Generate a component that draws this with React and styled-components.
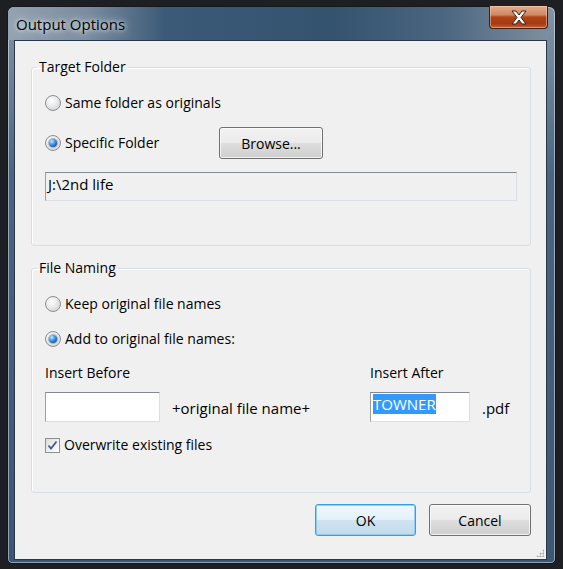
import React from "react";
import styled, { createGlobalStyle } from "styled-components";

const GlobalStyle = createGlobalStyle`
  body {
    margin: 0;
    background: #1d1f22;
    font-family: "Open Sans", "Noto Sans", sans-serif;
    font-size: 14px;
    color: #000;
  }
`;

const Window = styled.div`
  box-sizing: border-box;
  margin: 6px 0 0 7px;
  width: 549px;
  height: 558px;
  padding: 0 8px 3px 6px;
  border: 1px solid #14181d;
  border-radius: 7px 7px 5px 5px;
  box-shadow: inset 0 0 0 1px rgba(255, 255, 255, 0.45);
  background: linear-gradient(
    to bottom,
    #8294a6 0,
    #6d8399 12%,
    #4a6582 30%,
    #3c5775 100%
  );
  display: flex;
  flex-direction: column;
`;

const TitleBar = styled.div`
  height: 33px;
  margin: 0 -1px 0 -6px;
  padding-left: 7px;
  display: flex;
  align-items: flex-start;
  justify-content: space-between;
  background: linear-gradient(
    to right,
    #94a3b1 0,
    #7a8c9e 15%,
    #3b5a78 29%,
    #34536f 60%,
    #4a6580 80%,
    #7e8e9e 100%
  );
  border-radius: 6px 6px 0 0;
`;

const Title = styled.span`
  font-size: 15px;
  line-height: 20px;
  margin-top: 7px;
  padding-left: 1px;
  text-shadow: 0 0 8px rgba(235, 240, 245, 0.95), 0 0 4px rgba(235, 240, 245, 0.9);
`;

const CloseButton = styled.div`
  width: 59px;
  height: 23px;
  margin-top: -1px;
  box-sizing: border-box;
  border: 1px solid #3b2218;
  border-top: none;
  border-radius: 0 0 4px 4px;
  background: linear-gradient(
    to bottom,
    #e3ad8e 0,
    #d28760 40%,
    #b2441a 50%,
    #a73a12 80%,
    #c0603a 100%
  );
  box-shadow: inset 0 0 0 1px rgba(255, 210, 180, 0.5);
  display: flex;
  align-items: center;
  justify-content: center;
`;

const Client = styled.div`
  position: relative;
  box-sizing: border-box;
  width: 533px;
  height: 520px;
  padding: 16px 15px 0 16px;
  border: 1px solid #2a394a;
  background: #f0f0f0;
  display: flex;
  flex-direction: column;
`;

const Group = styled.fieldset`
  margin: 0 0 ${(p) => p.$gap || 0}px;
  padding: 16px 5px ${(p) => p.$bottom}px;
  border: 1px solid #d5dfe5;
  border-radius: 3px;
  box-shadow: inset 1px 1px 0 #fff;
  min-width: 0;
`;

const Legend = styled.legend`
  padding: 0 2px;
  line-height: 20px;
  font-size: 14px;
`;

const Body = styled.div`
  padding: 0 8px;
  display: flex;
  flex-direction: column;
`;

const Row = styled.div`
  display: flex;
  align-items: center;
  height: ${(p) => p.$h || 20}px;
  margin-top: ${(p) => p.$mt || 0}px;
`;

const Option = styled.label`
  display: flex;
  align-items: center;
  gap: 4px;
  width: ${(p) => (p.$w ? `${p.$w}px` : "auto")};
  line-height: 20px;
`;

const Radio = styled.span`
  box-sizing: border-box;
  width: 16px;
  height: 16px;
  border-radius: 50%;
  border: 1px solid #8b8f94;
  background: radial-gradient(circle at 40% 35%, #ffffff 0, #e9e9e9 45%, #c9cbcd 100%);
  display: flex;
  align-items: center;
  justify-content: center;

  &::after {
    content: "";
    width: 8px;
    height: 8px;
    border-radius: 50%;
    display: ${(p) => (p.$checked ? "block" : "none")};
    background: radial-gradient(circle at 35% 30%, #c6ecff 0, #4aa3ec 35%, #1f61b3 70%, #123f7c 100%);
    box-shadow: 0 0 0 1px rgba(30, 60, 110, 0.35);
  }
`;

const Check = styled.span`
  box-sizing: border-box;
  width: 15px;
  height: 15px;
  border: 1px solid #8e8f8f;
  background: linear-gradient(135deg, #dcdcdc 0, #f2f2f2 60%, #fff 100%);
  display: flex;
  align-items: center;
  justify-content: center;
`;

const Button = styled.div`
  box-sizing: border-box;
  width: ${(p) => p.$w}px;
  height: 32px;
  border: 1px solid ${(p) => (p.$default ? "#3c9be8" : "#707070")};
  border-radius: 3px;
  background: linear-gradient(
    to bottom,
    ${(p) => (p.$default ? "#eef7fc" : "#f2f2f2")} 0,
    ${(p) => (p.$default ? "#e5f1fa" : "#ebebeb")} 48%,
    ${(p) => (p.$default ? "#cfe3ef" : "#dddddd")} 52%,
    ${(p) => (p.$default ? "#c3dbea" : "#cfcfcf")} 100%
  );
  box-shadow: inset 0 0 0 1px ${(p) => (p.$default ? "rgba(120,200,250,0.8)" : "rgba(255,255,255,0.7)")};
  display: flex;
  align-items: center;
  justify-content: center;
  font-size: 14px;
`;

const TextBox = styled.div`
  box-sizing: border-box;
  flex: ${(p) => (p.$w ? "none" : 1)};
  width: ${(p) => (p.$w ? `${p.$w}px` : "auto")};
  height: ${(p) => p.$h || 30}px;
  padding: ${(p) => (p.$top ? "1px" : "0")} 2px 0;
  border-style: solid;
  border-width: 1px;
  border-color: #858a91 #dadfe5 #dadfe5 #9a9fa6;
  background: ${(p) => (p.$readonly ? "#f0f0f0" : "#fff")};
  display: flex;
  align-items: ${(p) => (p.$top ? "flex-start" : "center")};
  font-size: 15px;
  line-height: 20px;
`;

const Selected = styled.span`
  background: #3399ff;
  color: #fff;
`;

const NameGrid = styled.div`
  display: grid;
  grid-template-columns: 115px 186px 100px auto;
  grid-template-rows: 20px 30px;
  column-gap: 12px;
  row-gap: 10px;
  align-items: center;
  margin-top: 13px;
`;

const Suffix = styled.span`
  font-size: 15px;
  padding-top: 2px;
`;

const Footer = styled.div`
  display: flex;
  justify-content: flex-end;
  gap: 13px;
  margin-top: 11px;
`;

const Grip = styled.div`
  position: absolute;
  right: 2px;
  bottom: 2px;
  width: 8px;
  height: 8px;
  background-image: radial-gradient(circle, #a9afb6 0.9px, transparent 1.2px);
  background-size: 3px 3px;
  clip-path: polygon(100% 0, 100% 100%, 0 100%);
`;

const CloseX = () => (
  <svg width="18" height="15" viewBox="0 0 18 15">
    <path
      d="M2 1 H6 L9 5 L12 1 H16 L11 7.5 L16 14 H12 L9 10 L6 14 H2 L7 7.5 Z"
      fill="#f4f6f8"
      stroke="#3a2418"
      strokeWidth="1"
      strokeLinejoin="round"
    />
  </svg>
);

const Tick = () => (
  <svg width="11" height="11" viewBox="0 0 11 11">
    <path d="M1.5 5.5 L4 8.5 L9.5 1.5" fill="none" stroke="#3f5a8f" strokeWidth="1.8" />
  </svg>
);

export default function App() {
  return (
    <>
      <GlobalStyle />
      <Window>
        <TitleBar>
          <Title>Output Options</Title>
          <CloseButton>
            <CloseX />
          </CloseButton>
        </TitleBar>
        <Client>
          <Group $bottom={44} $gap={12}>
            <Legend>Target Folder</Legend>
            <Body>
              <Row>
                <Option>
                  <Radio />
                  Same folder as originals
                </Option>
              </Row>
              <Row $h={32} $mt={14}>
                <Option $w={174}>
                  <Radio $checked />
                  Specific Folder
                </Option>
                <Button $w={104}>Browse...</Button>
              </Row>
              <Row $h={29} $mt={13}>
                <TextBox $readonly $h={29} $top>
                  J:\2nd life
                </TextBox>
              </Row>
            </Body>
          </Group>

          <Group $bottom={37}>
            <Legend>File Naming</Legend>
            <Body>
              <Row>
                <Option>
                  <Radio />
                  Keep original file names
                </Option>
              </Row>
              <Row $mt={15}>
                <Option>
                  <Radio $checked />
                  Add to original file names:
                </Option>
              </Row>
              <NameGrid>
                <span>Insert Before</span>
                <span />
                <span>Insert After</span>
                <span />
                <TextBox $w={115} />
                <Suffix>+original file name+</Suffix>
                <TextBox $w={100} $top>
                  <Selected>TOWNER</Selected>
                </TextBox>
                <Suffix>.pdf</Suffix>
              </NameGrid>
              <Row $mt={13}>
                <Option>
                  <Check>
                    <Tick />
                  </Check>
                  Overwrite existing files
                </Option>
              </Row>
            </Body>
          </Group>

          <Footer>
            <Button $w={101} $default>
              OK
            </Button>
            <Button $w={102}>Cancel</Button>
          </Footer>
          <Grip />
        </Client>
      </Window>
    </>
  );
}
